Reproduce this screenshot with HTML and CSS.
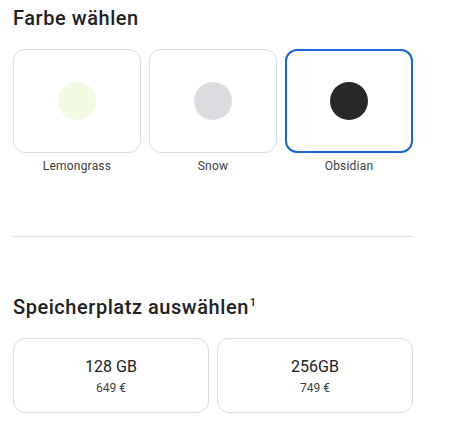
FILE: index.html
```html
<!DOCTYPE html>
<html lang="de">
<head>
    <meta charset="UTF-8">
    <meta name="viewport" content="width=device-width, initial-scale=1.0">
    <title>Farbe und Speicher</title>
    <link rel="stylesheet" href="styles.css">
</head>
<body>

    <!-- Farbauswahl -->
    <section class="section">
        <h2 class="section-title">Farbe wählen</h2>
        <ul class="color-list">
            <li class="color-item">
                <div class="color-card">
                    <span class="swatch swatch-lemongrass"></span>
                </div>
                <span class="color-name">Lemongrass</span>
            </li>
            <li class="color-item">
                <div class="color-card">
                    <span class="swatch swatch-snow"></span>
                </div>
                <span class="color-name">Snow</span>
            </li>
            <li class="color-item">
                <div class="color-card selected">
                    <span class="swatch swatch-obsidian"></span>
                </div>
                <span class="color-name">Obsidian</span>
            </li>
        </ul>
    </section>

    <hr class="divider">

    <!-- Speicherauswahl -->
    <section class="section">
        <h2 class="section-title">Speicherplatz auswählen<sup>1</sup></h2>
        <ul class="storage-list">
            <li class="storage-card">
                <span class="storage-size">128 GB</span>
                <span class="storage-price">649 €</span>
            </li>
            <li class="storage-card">
                <span class="storage-size">256GB</span>
                <span class="storage-price">749 €</span>
            </li>
        </ul>
    </section>

</body>
</html>
```

FILE: styles.css
```css
/* Generel styling */
body {
    font-family: Roboto, "Open Sans", sans-serif;
    color: #202124;
    background: #fff;
    margin: 0;
    padding: 0 13px;
    width: 400px;
}

.section-title {
    font-size: 20px;
    font-weight: 500;
    line-height: 28px;
    letter-spacing: 0.55px;
    margin: 4px 0 17px;
    color: #202124;
}

.section-title sup {
    font-size: 11px;
    vertical-align: 8px;
    line-height: 0;
    margin-left: 1px;
}

/* Farbkarten */
.color-list {
    display: grid;
    grid-template-columns: repeat(3, 1fr);
    gap: 8px;
    margin: 0;
    padding: 0;
    list-style: none;
}

.color-item {
    display: flex;
    flex-direction: column;
    align-items: center;
}

.color-card {
    box-sizing: border-box;
    width: 100%;
    height: 104px;
    border: 1px solid #dadce0;
    border-radius: 12px;
    display: flex;
    align-items: center;
    justify-content: center;
}

.color-card.selected {
    border: 2px solid #1a66d2;
}

.swatch {
    width: 38px;
    height: 38px;
    border-radius: 50%;
}

.swatch-lemongrass { background: #f2fae3; }
.swatch-snow { background: #dadce0; }
.swatch-obsidian { background: #282828; }

.color-name {
    font-size: 12px;
    line-height: 16px;
    letter-spacing: 0.2px;
    margin-top: 5px;
    color: #3c4043;
}

/* Trennlinie */
.divider {
    border: none;
    border-top: 1px solid #dadce0;
    margin: 62px 0 56px;
}

/* Speicherkarten */
.storage-list {
    display: grid;
    grid-template-columns: 1fr 1fr;
    gap: 8px;
    margin: 0;
    padding: 0;
    list-style: none;
}

.storage-card {
    box-sizing: border-box;
    height: 75px;
    border: 1px solid #dadce0;
    border-radius: 12px;
    display: flex;
    flex-direction: column;
    align-items: center;
    justify-content: center;
}

.storage-size {
    font-size: 16px;
    line-height: 22px;
}

.storage-price {
    font-size: 12px;
    line-height: 16px;
    margin-top: 2px;
    color: #3c4043;
}
```
